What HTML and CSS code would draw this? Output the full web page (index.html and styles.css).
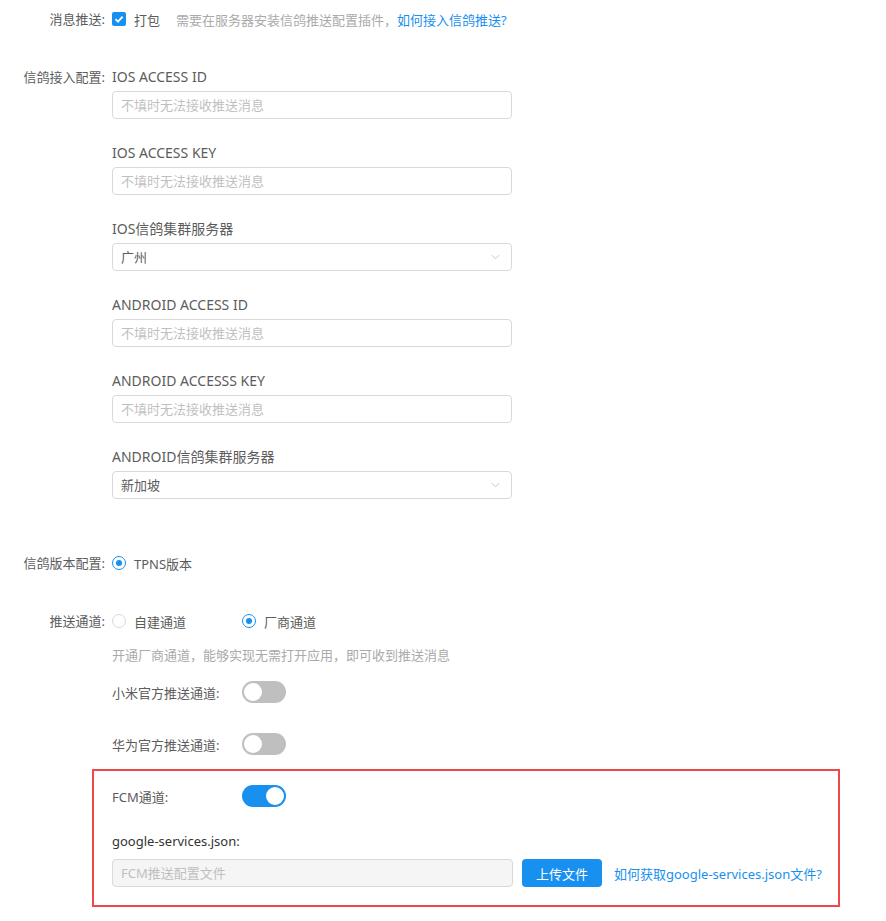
FILE: index.html
```html
<!DOCTYPE html>
<html lang="zh-CN">
<head>
<meta charset="utf-8">
<title>推送配置</title>
<link rel="stylesheet" href="styles.css">
</head>
<body>
<div class="form">
  <div class="row row-push">
    <div class="label">消息推送:</div>
    <div class="content inline">
      <span class="checkbox"><svg viewBox="0 0 14 14" width="14" height="14"><path d="M3.5 7.2 L6 9.6 L10.6 4.6" fill="none" stroke="#fff" stroke-width="1.8"/></svg></span>
      <span class="opt-text">打包</span>
      <span class="hint hint-inline">需要在服务器安装信鸽推送配置插件，</span><a class="link">如何接入信鸽推送?</a>
    </div>
  </div>

  <div class="row row-xg">
    <div class="label">信鸽接入配置:</div>
    <div class="content">
      <div class="field">
        <div class="field-label">IOS ACCESS ID</div>
        <div class="input placeholder">不填时无法接收推送消息</div>
      </div>
      <div class="field">
        <div class="field-label">IOS ACCESS KEY</div>
        <div class="input placeholder">不填时无法接收推送消息</div>
      </div>
      <div class="field">
        <div class="field-label">IOS信鸽集群服务器</div>
        <div class="input select"><span>广州</span><svg class="chev" viewBox="0 0 10 6" width="9" height="6"><path d="M1 1 L5 5 L9 1" fill="none" stroke="#bfbfbf" stroke-width="1"/></svg></div>
      </div>
      <div class="field">
        <div class="field-label">ANDROID ACCESS ID</div>
        <div class="input placeholder">不填时无法接收推送消息</div>
      </div>
      <div class="field">
        <div class="field-label">ANDROID ACCESSS KEY</div>
        <div class="input placeholder">不填时无法接收推送消息</div>
      </div>
      <div class="field">
        <div class="field-label">ANDROID信鸽集群服务器</div>
        <div class="input select"><span>新加坡</span><svg class="chev" viewBox="0 0 10 6" width="9" height="6"><path d="M1 1 L5 5 L9 1" fill="none" stroke="#bfbfbf" stroke-width="1"/></svg></div>
      </div>
    </div>
  </div>

  <div class="row row-ver">
    <div class="label">信鸽版本配置:</div>
    <div class="content inline">
      <span class="radio checked"></span><span class="opt-text">TPNS版本</span>
    </div>
  </div>

  <div class="row row-channel">
    <div class="label">推送通道:</div>
    <div class="content">
      <div class="inline radios">
        <span class="radio-item"><span class="radio"></span><span class="opt-text">自建通道</span></span>
        <span class="radio-item"><span class="radio checked"></span><span class="opt-text">厂商通道</span></span>
      </div>
      <div class="hint hint-block">开通厂商通道，能够实现无需打开应用，即可收到推送消息</div>
      <div class="switch-row sw-mi">
        <span class="sw-label">小米官方推送通道:</span><span class="switch"></span>
      </div>
      <div class="switch-row sw-hw">
        <span class="sw-label">华为官方推送通道:</span><span class="switch"></span>
      </div>
    </div>
  </div>

  <div class="fcm-box">
    <div class="switch-row">
      <span class="sw-label">FCM通道:</span><span class="switch on"></span>
    </div>
    <div class="field-label gs-label">google-services.json:</div>
    <div class="inline upload-row">
      <div class="input disabled placeholder">FCM推送配置文件</div>
      <button class="btn">上传文件</button>
      <a class="link">如何获取google-services.json文件?</a>
    </div>
  </div>
</div>
</body>
</html>
```

FILE: styles.css
```css
* { box-sizing: border-box; }
body {
  margin: 0;
  background: #fff;
  font-family: "Noto Sans", "Noto Sans CJK SC", sans-serif;
  font-size: 13px;
  color: #5c5c5c;
}
.form { padding-top: 9px; width: 886px; }
.row { display: flex; align-items: flex-start; }
.label {
  width: 105px;
  flex: none;
  text-align: right;
  line-height: 20px;
  height: 20px;
  color: #5c5c5c;
  margin-right: 7px;
  white-space: nowrap;
}
.content { flex: 1; }
.inline { display: flex; align-items: center; height: 20px; white-space: nowrap; }

.checkbox {
  width: 14px; height: 14px; border-radius: 2px;
  background: #1890f0;
  display: inline-flex; align-items: center; justify-content: center;
}
.checkbox svg { display: block; }
.opt-text { margin-left: 8px; color: #5c5c5c; }
.hint { color: #aaa; }
.hint-inline { margin-left: 16px; }
.link { color: #1890f0; text-decoration: none; cursor: pointer; }

.row-xg { margin-top: 38px; }
.field { margin-bottom: 24px; }
.field-label { line-height: 20px; height: 20px; font-size: 14px; color: #5c5c5c; margin-bottom: 4px; }
.input {
  width: 400px; height: 28px;
  border: 1px solid #d9d9d9; border-radius: 4px;
  padding: 0 8px;
  line-height: 26px;
  color: #5c5c5c;
  background: #fff;
  flex: none;
}
.placeholder { color: #bfbfbf; }
.select { display: flex; align-items: center; justify-content: space-between; padding-right: 11px; }
.chev { display: block; }
.input.disabled { background: #f5f5f5; }

.row-ver { margin-top: 30px; }
.radio {
  width: 14px; height: 14px; border-radius: 50%;
  border: 1px solid #d9d9d9; background: #fff;
  display: inline-block; position: relative; flex: none;
}
.radio.checked { border-color: #1890f0; }
.radio.checked::after {
  content: ""; position: absolute; left: 3px; top: 3px;
  width: 6px; height: 6px; border-radius: 50%; background: #1890f0;
}
.row-channel { margin-top: 38px; }
.radio-item { display: inline-flex; align-items: center; width: 130px; }
.hint-block { margin-top: 14px; line-height: 20px; }
.switch-row { display: flex; align-items: center; height: 22px; }
.sw-mi { margin-top: 16px; }
.sw-hw { margin-top: 30px; }
.sw-label { width: 130px; flex: none; color: #5c5c5c; }
.switch {
  width: 44px; height: 22px; border-radius: 11px;
  background: #bfbfbf; position: relative; display: inline-block;
}
.switch::after {
  content: ""; position: absolute; top: 2px; left: 2px;
  width: 18px; height: 18px; border-radius: 50%; background: #fff;
}
.switch.on { background: #1890f0; }
.switch.on::after { left: 24px; }

.fcm-box {
  margin: 14px 0 0 92px;
  width: 748px;
  border: 2px solid #f04848;
  padding: 14px 18px 18px 18px;
}
.gs-label { margin-top: 24px; font-size: 13px; margin-bottom: 8px; color: #333; }
.upload-row { height: 28px; }
.btn {
  margin-left: 9px;
  width: 80px; height: 28px;
  border: none; border-radius: 4px;
  background: #1890f0; color: #fff;
  font-family: inherit; font-size: 13px;
  padding: 0;
  flex: none;
}
.upload-row .input { width: 401px; }
.upload-row .link { margin-left: 12px; }
```
